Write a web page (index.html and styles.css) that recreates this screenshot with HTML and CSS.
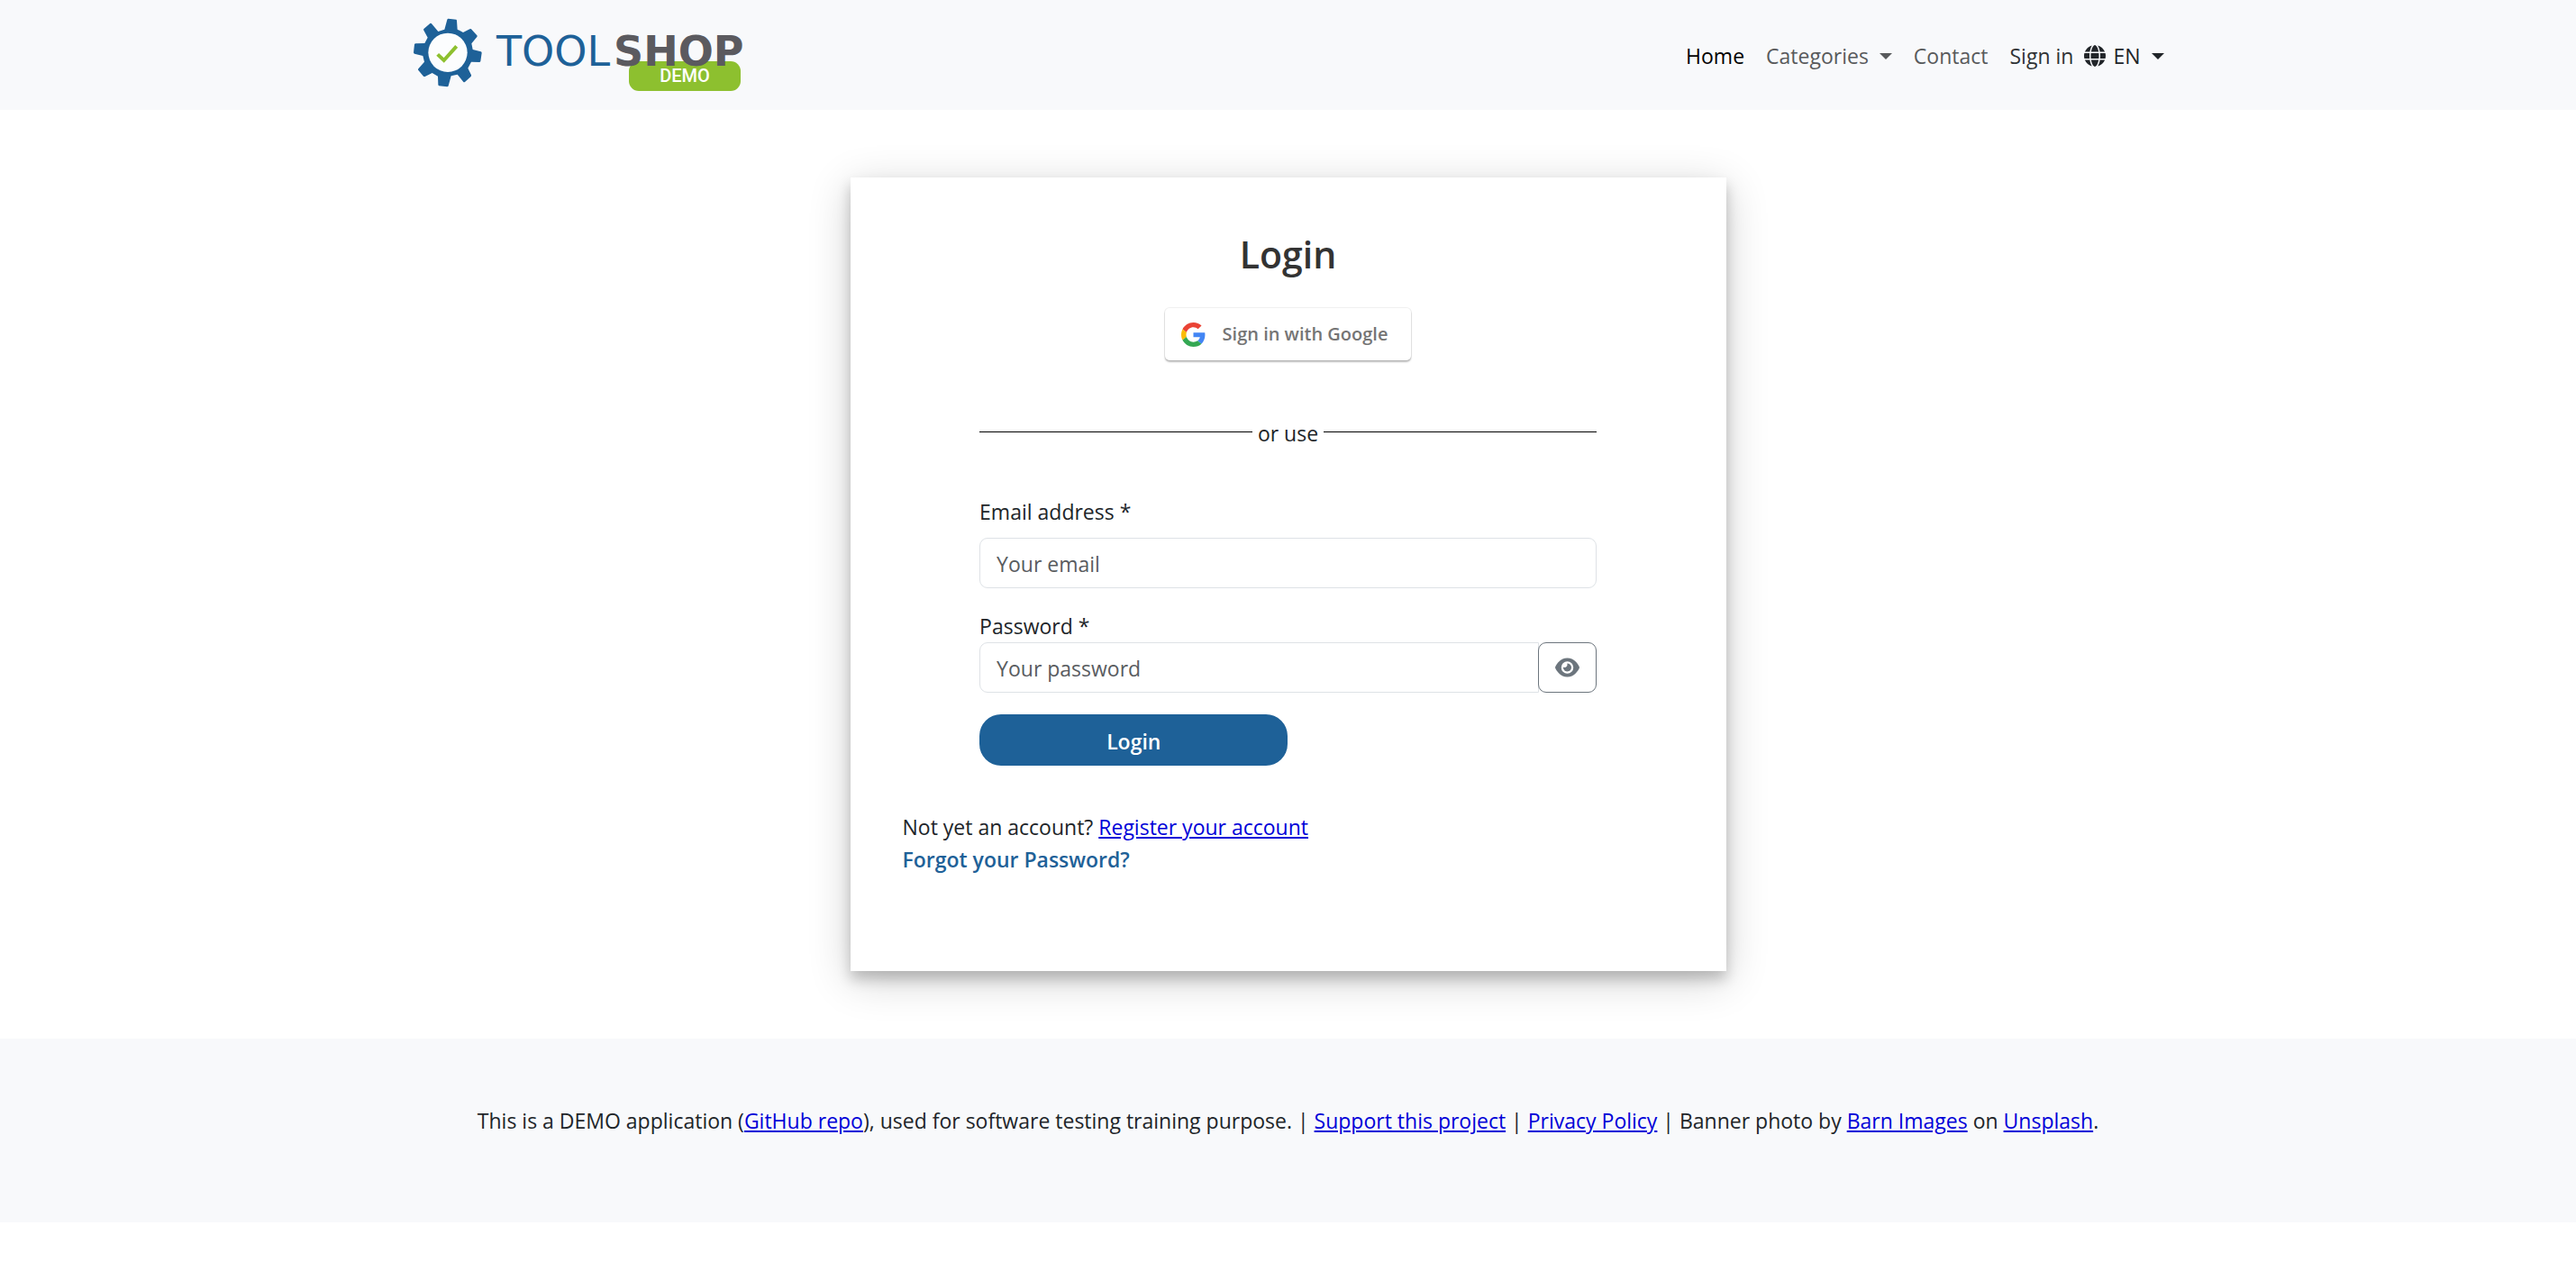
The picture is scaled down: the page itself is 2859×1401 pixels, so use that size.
FILE: index.html
```html
<!DOCTYPE html>
<html lang="en">
<head>
  <meta charset="utf-8">
  <meta name="viewport" content="width=device-width, initial-scale=1">
  <title>Login - Toolshop</title>
  <link rel="stylesheet" href="styles.css">
</head>
<body>
  <header class="site-header">
    <nav class="container navbar" aria-label="Main">
      <a class="brand" href="#" aria-label="Toolshop Demo">
        <svg class="logo" viewBox="17 18 374 86" width="374" height="86">
          <g transform="scale(.33333)">
            <path fill="#1e6198" d="M170 62 196 65Q198 66 198 69L200 98 219 108 241 97Q244 95 246 97L265 118Q267 120 265 123L247 145 251 165 278 172Q281 173 281 176L277 204Q276 207 273 207L246 206 235 227 246 250Q247 253 244 256L225 273Q222 275 220 273L200 248 179 253 170 286Q169 289 166 289L139 286Q136 285 136 282L135 254 116 243 92 255Q89 256 87 254L70 234Q68 232 70 229L90 206 85 186 57 179Q54 178 54 175L57 148Q58 145 61 145L91 144 101 125 88 101Q86 98 89 95L109 78Q112 76 114 79L136 105 157 98 166 65Q167 62 170 62Z"/>
            <circle cx="168" cy="175" r="65" fill="#fcfdfe"/>
            <path d="M134 181 155 201 197 154" fill="none" stroke="#8dc02f" stroke-width="12"/>
          </g>
          <rect x="257" y="68" width="124" height="33" rx="11" fill="#8dc02f"/>
          <text x="110" y="73" class="logo-name">TOOL</text>
          <text x="240" y="73" class="logo-name logo-shop">SHOP</text>
          <text x="319" y="91" class="logo-demo">DEMO</text>
        </svg>
      </a>
      <ul class="nav-list">
        <li><a class="nav-link active" href="#" aria-current="page">Home</a></li>
        <li><a class="nav-link dropdown" href="#">Categories</a></li>
        <li><a class="nav-link" href="#">Contact</a></li>
        <li><a class="nav-link strong" href="#">Sign in</a></li>
        <li>
          <button class="language dropdown" type="button">
            <svg viewBox="0 0 512 512" width="24" height="24" fill="currentColor" aria-hidden="true"><path d="M352 256c0 22.2-1.2 43.6-3.3 64H163.3c-2.2-20.4-3.3-41.8-3.3-64s1.2-43.6 3.3-64H348.7c2.2 20.4 3.3 41.8 3.3 64zm28.8-64H503.9c5.3 20.5 8.1 41.9 8.1 64s-2.8 43.5-8.1 64H380.8c2.1-20.6 3.2-42 3.2-64s-1.1-43.4-3.2-64zm112.6-32H376.7c-10-63.9-29.8-117.4-55.3-151.6c78.3 20.7 142 77.5 171.9 151.6zm-149.1 0H167.7c6.1-36.4 15.5-68.6 27-94.7c10.5-23.6 22.2-40.7 33.5-51.5C239.4 3.2 248.7 0 256 0s16.6 3.2 27.8 13.8c11.3 10.8 23 27.9 33.5 51.5c11.6 26 20.9 58.2 27 94.7zm-209 0H18.6C48.6 85.9 112.2 29.1 190.6 8.4C165.1 42.6 145.3 96.1 135.3 160zM8.1 192H131.2c-2.1 20.6-3.2 42-3.2 64s1.1 43.4 3.2 64H8.1C2.8 299.5 0 278.1 0 256s2.8-43.5 8.1-64zM194.7 446.6c-11.6-26-20.9-58.2-27-94.6H344.3c-6.1 36.4-15.5 68.6-27 94.6c-10.5 23.6-22.2 40.7-33.5 51.5C272.6 508.8 263.3 512 256 512s-16.6-3.2-27.8-13.8c-11.3-10.8-23-27.9-33.5-51.5zM135.3 352c10 63.9 29.8 117.4 55.3 151.6C112.2 482.9 48.6 426.1 18.6 352H135.3zm358.1 0c-30 74.1-93.6 130.9-171.9 151.6c25.5-34.2 45.2-87.7 55.3-151.6H493.4z"/></svg>
            <span>EN</span>
          </button>
        </li>
      </ul>
    </nav>
  </header>

  <main class="container">
    <section class="auth-card">
      <h1 class="auth-title">Login</h1>
      <button class="google-button" type="button">
        <svg viewBox="0 0 48 48" width="27" height="27" aria-hidden="true">
          <path fill="#ea4335" d="M24 9.5c3.54 0 6.71 1.22 9.21 3.6l6.85-6.85C35.9 2.38 30.47 0 24 0 14.62 0 6.51 5.38 2.56 13.22l7.98 6.19C12.43 13.72 17.74 9.5 24 9.5z"/>
          <path fill="#4285f4" d="M46.98 24.55c0-1.57-.15-3.09-.38-4.55H24v9.02h12.94c-.58 2.96-2.26 5.48-4.78 7.18l7.73 6c4.51-4.18 7.09-10.36 7.09-17.65z"/>
          <path fill="#fbbc05" d="M10.53 28.59c-.48-1.45-.76-2.99-.76-4.59s.27-3.14.76-4.59l-7.98-6.19C.92 16.46 0 20.12 0 24c0 3.88.92 7.54 2.56 10.78l7.97-6.19z"/>
          <path fill="#34a853" d="M24 48c6.48 0 11.93-2.13 15.89-5.81l-7.73-6c-2.15 1.45-4.92 2.3-8.16 2.3-6.26 0-11.57-4.22-13.47-9.91l-7.98 6.19C6.51 42.62 14.62 48 24 48z"/>
        </svg>
        <span>Sign in with Google</span>
      </button>
      <p class="separator">or use</p>
      <form class="auth-form">
        <div class="field email-field">
          <label for="email">Email address *</label>
          <input class="text-input" id="email" type="email" placeholder="Your email">
        </div>
        <div class="field">
          <label for="password">Password *</label>
          <div class="input-group">
            <input class="text-input" id="password" type="password" placeholder="Your password">
            <button class="reveal-button" type="button" aria-label="Show password">
              <svg viewBox="0 0 576 512" width="27" height="24" fill="currentColor" aria-hidden="true"><path d="M288 32c-80.8 0-145.5 36.8-192.6 80.6C48.6 156 17.3 208 2.5 243.7c-3.3 7.9-3.3 16.7 0 24.6C17.3 304 48.6 356 95.4 399.4C142.5 443.2 207.2 480 288 480s145.5-36.8 192.6-80.6c46.8-43.5 78.1-95.4 93-131.1c3.3-7.9 3.3-16.7 0-24.6c-14.9-35.7-46.2-87.7-93-131.1C433.5 68.8 368.8 32 288 32zM144 256a144 144 0 1 1 288 0 144 144 0 1 1 -288 0zm144-64c0 35.3-28.7 64-64 64c-7.1 0-13.9-1.2-20.3-3.3c-5.5-1.8-11.9 1.6-11.7 7.4c.3 6.9 1.3 13.8 3.2 20.7c13.7 51.2 66.4 81.6 117.6 67.9s81.6-66.4 67.9-117.6c-11.1-41.5-47.8-69.4-88.6-71.1c-5.8-.2-9.2 6.1-7.4 11.7c2.1 6.4 3.3 13.2 3.3 20.3z"/></svg>
            </button>
          </div>
        </div>
        <button class="submit-button" type="submit">Login</button>
      </form>
      <div class="auth-links">
        <p>Not yet an account? <a class="text-link" href="#">Register your account</a></p>
        <a class="forgot-link" href="#">Forgot your Password?</a>
      </div>
    </section>
  </main>

  <footer class="site-footer">
    <p>This is a DEMO application (<a class="text-link" href="#">GitHub repo</a>), used for software testing training purpose. | <a class="text-link" href="#">Support this project</a> | <a class="text-link" href="#">Privacy Policy</a> | Banner photo by <a class="text-link" href="#">Barn Images</a> on <a class="text-link" href="#">Unsplash</a>.</p>
  </footer>
</body>
</html>
```
FILE: styles.css
```css
* {
  box-sizing: border-box;
}

body {
  margin: 0;
  background: #fff;
  color: #212529;
  font: 400 23px/36px "Open Sans", "Noto Sans", sans-serif;
}

p,
h1,
ul {
  margin: 0;
  padding: 0;
}

svg {
  display: block;
  flex: none;
}

button,
input {
  font: inherit;
}

button {
  cursor: pointer;
}

.container {
  width: 100%;
  max-width: 1980px;
  margin: 0 auto;
  padding: 0 18px;
}

/* Header */

.site-header {
  padding: 18px 0;
  background: #f8f9fb;
}

.navbar {
  display: flex;
  flex-wrap: wrap;
  align-items: center;
  justify-content: space-between;
}

.logo-name {
  fill: #1e6198;
  font: 400 46px "DejaVu Sans", sans-serif;
}

.logo-shop {
  font-weight: 700;
  fill: #5b5a5f;
}

.logo-demo {
  font: 500 20px Roboto, sans-serif;
  fill: #fff;
  text-anchor: middle;
}

.nav-list {
  display: flex;
  flex-wrap: wrap;
  align-items: center;
  padding-top: 2px;
  list-style: none;
}

.nav-link {
  display: flex;
  align-items: center;
  padding: 12px;
  color: #585a5c;
  text-decoration: none;
}

.nav-link.active {
  color: #000;
}

.nav-link.strong {
  color: #303335;
}

.dropdown::after {
  content: "";
  margin-left: 12px;
  border: 7px solid transparent;
  border-top-color: currentColor;
  border-bottom: 0;
}

.language {
  display: flex;
  align-items: center;
  padding: 0;
  border: 0;
  background: none;
  color: #212529;
}

.language span {
  margin-left: 8px;
}

/* Login card */

.auth-card {
  display: flex;
  flex-direction: column;
  align-items: center;
  width: 50%;
  margin: 75px auto;
  padding: 60px 58px 106px;
  background: #fff;
  box-shadow: 0 9px 14px rgba(0, 0, 0, .2), 0 10px 44px rgba(0, 0, 0, .19);
}

.auth-title {
  color: #333;
  font-size: 41px;
  font-weight: 600;
  line-height: 50px;
}

.google-button {
  display: flex;
  align-items: center;
  gap: 19px;
  height: 58px;
  margin-top: 35px;
  padding: 0 26px 0 18px;
  border: 0;
  border-radius: 5px;
  background: #fff;
  box-shadow: 0 0 0 1px rgba(0, 0, 0, .06), 0 2px 2px rgba(0, 0, 0, .25);
  color: #757575;
  font-size: 20px;
  font-weight: 600;
}

.separator {
  display: flex;
  align-items: center;
  gap: 6px;
  width: 80%;
  margin-top: 63px;
}

.separator::before,
.separator::after {
  content: "";
  flex: 1;
  height: 1px;
  margin-bottom: 3px;
  background: #000;
}

.auth-form {
  display: flex;
  flex-direction: column;
  align-items: flex-start;
  gap: 24px;
  width: 80%;
  margin-top: 51px;
}

.field {
  display: flex;
  flex-direction: column;
  width: 100%;
}

.email-field {
  gap: 11px;
}

.text-input {
  width: 100%;
  height: 56px;
  padding: 2px 18px 0;
  border: 1px solid #dee2e6;
  border-radius: 9px;
  background: #fff;
  color: #212529;
}

.text-input::placeholder {
  color: #595c5f;
  opacity: 1;
}

.input-group {
  display: flex;
}

.input-group .text-input {
  flex: 1;
  border-top-right-radius: 0;
  border-bottom-right-radius: 0;
}

.reveal-button {
  display: flex;
  align-items: center;
  justify-content: center;
  width: 65px;
  margin-left: -1px;
  padding: 0;
  border: 1px solid #6c757d;
  border-radius: 9px;
  background: #fff;
  color: #6c757d;
}

.submit-button {
  width: 50%;
  height: 57px;
  padding: 2px 0 0;
  border: 0;
  border-radius: 24px;
  background: #1e6198;
  color: #fff;
  font-weight: 600;
}

.auth-links {
  width: 100%;
  margin-top: 50px;
}

.text-link {
  color: #0000d8;
  text-decoration: underline;
}

.forgot-link {
  color: #1e6198;
  font-weight: 600;
  text-decoration: none;
}

/* Footer */

.site-footer {
  padding: 73px 18px 95px;
  background: #f8f9fb;
  text-align: center;
}
```
